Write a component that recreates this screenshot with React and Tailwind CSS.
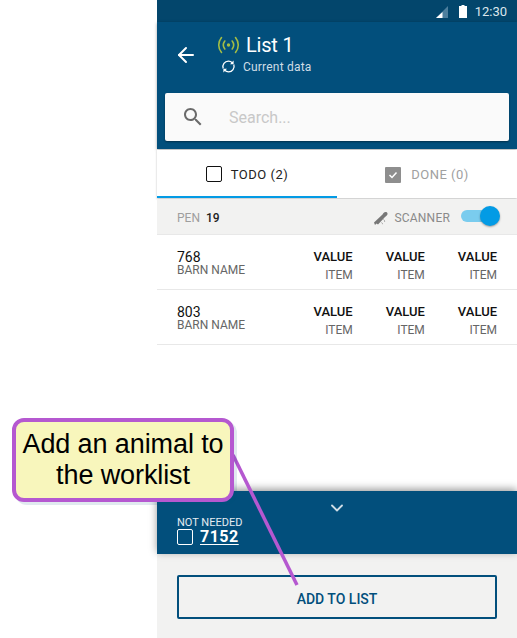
import { ArrowLeft, ChevronDown } from 'lucide-react';

const rows = [
  { id: '768', barn: 'BARN NAME' },
  { id: '803', barn: 'BARN NAME' },
];

const Row = ({ id, barn }) => (
  <div className="flex h-[55px] items-start border-b border-[#e8e8e8] pl-5 pr-5 pt-[15px]">
    <div className="flex-1">
      <div className="text-[14px] leading-[14px] text-[#111]">{id}</div>
      <div className="text-[12px] leading-[13px] text-[#666]">{barn}</div>
    </div>
    {[0, 1, 2].map((i) => (
      <div key={i} className="ml-[33px] text-right">
        <div className="text-[13px] font-medium leading-[14px] text-[#111]">VALUE</div>
        <div className="mt-[4px] text-[12px] leading-[14px] text-[#666]">ITEM</div>
      </div>
    ))}
  </div>
);

const App = () => {
  return (
    <div className="relative flex h-[638px] w-[517px] justify-end overflow-hidden bg-white font-['Roboto',sans-serif]">
      <div className="flex h-full w-[360px] flex-col">
        {/* status bar */}
        <div className="flex h-[22px] items-center justify-end bg-[#03466c] pr-[10px] text-[#dce6ec]">
          <svg width="12" height="12" viewBox="0 0 12 12" className="mr-[11px] mt-[1px]">
            <path d="M12 0V12H0Z" fill="#4d7f9d" />
            <path d="M6.5 6V12H0Z" fill="#fff" />
          </svg>
          <svg width="8" height="13" viewBox="0 0 8 13" className="mr-[8px]">
            <path d="M2.5 0h3v1H8v12H0V1h2.5Z" fill="#fff" />
          </svg>
          <span className="text-[13px] leading-none">12:30</span>
        </div>

        {/* header */}
        <div className="flex h-[127px] flex-col bg-[#024f7c] px-2 shadow-[0_1px_3px_rgba(0,0,0,0.35)]">
          <div className="flex h-[71px] items-start">
            <ArrowLeft size={24} strokeWidth={2} className="ml-[9px] mt-[21px] text-white" />
            <div className="ml-[19px] mt-[10px]">
              <div className="flex items-center">
                <svg width="23" height="18" viewBox="0 0 23 18" fill="none" stroke="#a3bd45" strokeWidth="1.6" strokeLinecap="round">
                  <path d="M4.5 1.5C0.8 6 0.8 12 4.5 16.5" />
                  <path d="M18.5 1.5C22.2 6 22.2 12 18.5 16.5" />
                  <path d="M7.8 5C5.9 7.5 5.9 10.5 7.8 13" />
                  <path d="M15.2 5C17.1 7.5 17.1 10.5 15.2 13" />
                  <circle cx="11.5" cy="9" r="1.7" fill="#a3bd45" stroke="none" />
                </svg>
                <span className="ml-[6px] text-[20px] leading-[26px] tracking-[-0.2px] text-white">List 1</span>
              </div>
              <div className="mt-[1px] flex items-center pl-[4px]">
                <svg width="15" height="15" viewBox="0 0 15 15" fill="none">
                  <path d="M2.2 9.5A5.5 5.5 0 0 1 7.5 2.2C9 2.2 10.3 2.8 11.3 3.7" stroke="#fff" strokeWidth="1.3" />
                  <path d="M12.8 5.5A5.5 5.5 0 0 1 7.5 12.8C6 12.8 4.7 12.2 3.7 11.3" stroke="#fff" strokeWidth="1.3" />
                  <path d="M12.6 1.6V5.2H9Z" fill="#fff" />
                  <path d="M2.4 13.4V9.8H6Z" fill="#fff" />
                </svg>
                <span className="ml-[7px] text-[12px] leading-[14px] tracking-[0.2px] text-[#cfdde6]">Current data</span>
              </div>
            </div>
          </div>
          <div className="flex h-[48px] items-center rounded-[2px] bg-[#fafafa] shadow-[0_1px_2px_rgba(0,0,0,0.4)]">
            <svg width="24" height="24" viewBox="0 0 24 24" fill="#6b6b6b" className="ml-[16px]">
              <path d="M15.5 14h-.79l-.28-.27C15.41 12.59 16 11.11 16 9.5 16 5.91 13.09 3 9.5 3S3 5.91 3 9.5 5.91 16 9.5 16c1.61 0 3.09-.59 4.23-1.57l.27.28v.79l5 4.99L20.49 19l-4.99-5zm-6 0C7.01 14 5 11.99 5 9.5S7.01 5 9.5 5 14 7.01 14 9.5 11.99 14 9.5 14z" />
            </svg>
            <span className="ml-[24px] mt-[1px] text-[16px] text-[#c8c8c8]">Search...</span>
          </div>
        </div>

        {/* tabs */}
        <div className="mt-[1px] flex h-[48px] bg-white shadow-[0_1px_2px_rgba(0,0,0,0.25)]">
          <div className="flex w-[180px] items-center justify-center border-b-[2px] border-[#039be5] pt-[2px]">
            <span className="h-[16px] w-[16px] rounded-[2px] border-[1.5px] border-[#111]" />
            <span className="ml-[9px] mt-[1px] text-[13px] tracking-[0.5px] text-[#222]">TODO (2)</span>
          </div>
          <div className="flex flex-1 items-center justify-center pt-[2px]">
            <span className="flex h-[16px] w-[16px] items-center justify-center rounded-[1px] bg-[#8e8e8e]">
              <svg width="10" height="8" viewBox="0 0 10 8" fill="none" stroke="#fff" strokeWidth="1.5">
                <path d="M1.5 4L4 6.5L8.5 1.5" />
              </svg>
            </span>
            <span className="ml-[10px] text-[13px] tracking-[0.5px] text-[#a0a0a0]">DONE (0)</span>
          </div>
        </div>

        {/* pen row */}
        <div className="mt-[1px] flex h-[36px] items-center border-b border-[#e8e8e8] bg-[#f2f2f1] pl-5 pr-[22px] pt-[3px]">
          <span className="text-[12px] text-[#9e9e9e]">PEN</span>
          <span className="ml-[6px] text-[12px] font-medium text-[#222]">19</span>
          <svg width="16" height="15" viewBox="0 0 16 15" className="ml-auto" fill="none">
            <path d="M1 11.5L9.5 3.5L10.5 2C11.5 1 13 0.8 14 1.5C15 2.5 14.5 4 13.5 4.8L12 6L5 13.5L3.5 12.5L2 14Z" fill="#777" />
            <path d="M10.5 8.5C11.5 9 11.8 10 11.5 11M8.5 11.5C9.3 11.8 9.6 12.5 9.5 13.2" stroke="#a5a5a5" strokeWidth="1" />
          </svg>
          <span className="ml-[6px] text-[12px] tracking-[0.2px] text-[#8a8a8a]">SCANNER</span>
          <div className="relative mb-[4px] ml-[11px] h-[12px] w-[34px] rounded-full bg-[#7accee]">
            <span className="absolute right-[-5px] top-[-4px] h-[20px] w-[20px] rounded-full bg-[#039be5] shadow-[0_1px_2px_rgba(0,0,0,0.35)]" />
          </div>
        </div>

        {rows.map((r) => (
          <Row key={r.id} {...r} />
        ))}

        <div className="flex-1" />

        {/* bottom sheet */}
        <div className="relative h-[63px] bg-[#024f7c] pl-5 pt-[26px] shadow-[0_-2px_8px_rgba(0,0,0,0.4)]">
          <ChevronDown size={20} strokeWidth={2.2} className="absolute left-[170px] top-[7px] text-[#cfdde6]" />
          <div className="text-[11px] leading-[12px] text-[#e4ecf1]">NOT NEEDED</div>
          <div className="mt-[-2px] flex items-center">
            <span className="h-[16px] w-[16px] rounded-[2px] border-[1.5px] border-white" />
            <span className="ml-[7px] text-[16px] font-bold leading-[19px] tracking-[0.5px] text-white underline underline-offset-2">7152</span>
          </div>
        </div>
        <div className="h-[84px] bg-[#f2f2f1] px-5 pt-[21px]">
          <div className="flex h-[44px] items-center justify-center rounded-[2px] border-[2px] border-[#024f7c] pt-[5px] text-[14px] font-medium text-[#024f7c]">
            ADD TO LIST
          </div>
        </div>
      </div>

      {/* callout */}
      <svg width="517" height="638" className="pointer-events-none absolute left-0 top-0">
        <path d="M233 455L297 585" stroke="#b558d0" strokeWidth="3.5" />
      </svg>
      <div className="absolute left-[12px] top-[418px] flex h-[84px] w-[222px] flex-col items-center justify-center rounded-[12px] border-[4px] border-[#b558d0] bg-[#f8f6bc] font-['Liberation_Sans',sans-serif] text-[27px] leading-[31px] tracking-[-0.1px] text-black shadow-[3px_3px_0_rgba(2,79,124,0.12)]">
        <div>Add an animal to</div>
        <div>the worklist</div>
      </div>
    </div>
  );
};

export default App;
